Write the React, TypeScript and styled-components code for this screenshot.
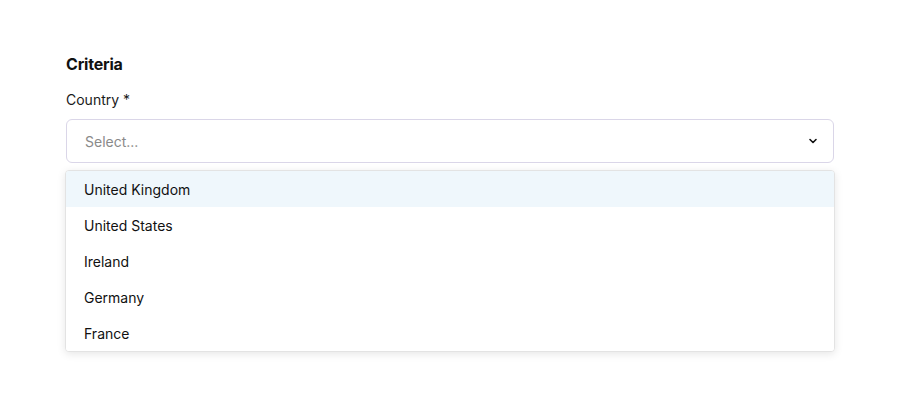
import React, { useState } from 'react';
import styled, { createGlobalStyle } from 'styled-components';

const GlobalStyle = createGlobalStyle`
  html, body {
    margin: 0;
    padding: 0;
    background: #ffffff;
    font-family: Inter, "Noto Sans", sans-serif;
    color: #111111;
  }
`;

const Page = styled.div`
  width: 900px;
  height: 420px;
  box-sizing: border-box;
  padding: 53px 66px 0 66px;
`;

const Heading = styled.h2`
  margin: 0;
  font-size: 16px;
  font-weight: 700;
  line-height: 22px;
  letter-spacing: -0.2px;
`;

const Label = styled.label`
  display: block;
  margin-top: 15px;
  font-size: 14px;
  line-height: 20px;
  color: #1a1a1a;
`;

const Field = styled.div`
  position: relative;
  margin-top: 9px;
`;

const Control = styled.div`
  box-sizing: border-box;
  height: 44px;
  border: 1px solid #dad6e8;
  border-radius: 6px;
  display: flex;
  align-items: center;
  justify-content: space-between;
  padding: 0 14px 0 18px;
  background: #fff;
`;

const Placeholder = styled.span`
  font-size: 14px;
  color: #8a8a8a;
`;

const Menu = styled.ul`
  position: absolute;
  top: 51px;
  left: -1px;
  right: -1px;
  margin: 0;
  padding: 0;
  list-style: none;
  background: #fff;
  border: 1px solid #e3e3e3;
  border-radius: 4px;
  box-shadow: 0 2px 8px rgba(0, 0, 0, 0.1);
  overflow: hidden;
`;

const Option = styled.li<{ $active: boolean }>`
  height: 36px;
  display: flex;
  align-items: center;
  padding: 0 18px;
  font-size: 14px;
  color: #111;
  background: ${p => (p.$active ? '#eff7fc' : '#fff')};
`;

const Chevron = () => (
  <svg width="12" height="12" viewBox="0 0 12 12" fill="none">
    <path d="M3 4.5 L6 7.5 L9 4.5" stroke="#111" strokeWidth="1.6" strokeLinecap="round" strokeLinejoin="round" />
  </svg>
);

const countries = ['United Kingdom', 'United States', 'Ireland', 'Germany', 'France'];

export default function App() {
  const [active, setActive] = useState(0);
  return (
    <>
      <GlobalStyle />
      <Page>
        <Heading>Criteria</Heading>
        <Label>Country *</Label>
        <Field>
          <Control>
            <Placeholder>Select...</Placeholder>
            <Chevron />
          </Control>
          <Menu>
            {countries.map((c, i) => (
              <Option key={c} $active={i === active} onMouseEnter={() => setActive(i)}>
                {c}
              </Option>
            ))}
          </Menu>
        </Field>
      </Page>
    </>
  );
}
